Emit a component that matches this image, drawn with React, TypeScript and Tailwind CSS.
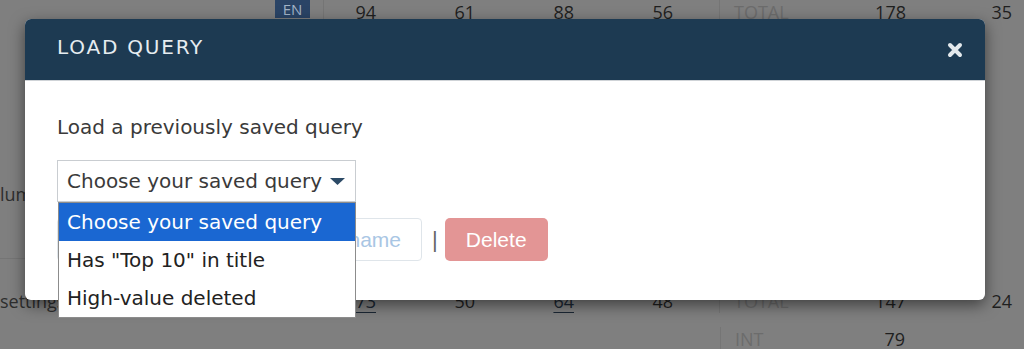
import React from 'react';

const numCell = 'w-[99px] text-right';

function TableRow({ cells, total, a, b, link = [] as number[] }: { cells: string[]; total: string; a: string; b: string; link?: number[] }) {
  return (
    <div className="flex h-[24px] text-[18px] leading-[24px] text-[#1f1f1f]">
      <div className="w-[52px] text-right">
        <span className={link.includes(0) ? 'text-[#1b2733] underline underline-offset-4' : ''}>{cells[0]}</span>
      </div>
      {cells.slice(1).map((c, i) => (
        <div key={i} className={numCell}>
          <span className={link.includes(i + 1) ? 'text-[#1b2733] underline underline-offset-4' : ''}>{c}</span>
        </div>
      ))}
      <div className="w-[46px]" />
      <div className="w-px self-stretch bg-[#757575]" />
      <div className="w-[120px] pl-[14px] text-[#6c6c6c]">{total}</div>
      <div className="w-[66px] text-right">{a}</div>
      <div className="w-[106px] text-right">{b}</div>
    </div>
  );
}

function CloseIcon() {
  return (
    <svg width="16" height="16" viewBox="0 0 16 16" className="text-[#e3e8ec]">
      <path d="M3 3 L13 13 M13 3 L3 13" stroke="currentColor" strokeWidth="4" strokeLinecap="round" />
    </svg>
  );
}

export default function App() {
  const options = ['Choose your saved query', 'Has "Top 10" in title', 'High-value deleted'];

  return (
    <div className="relative h-[349px] w-[1024px] overflow-hidden bg-[#7f7f7f] font-['Open_Sans',sans-serif]">
      {/* page behind the backdrop */}
      <div className="flex flex-col">
        <div className="flex h-[24px]">
          <div className="w-[275px]" />
          <div className="flex h-[18px] w-[35px] items-end justify-center bg-[#2a4466] text-[15px] leading-[17px] text-[#a3b3c6]">
            EN
          </div>
          <div className="w-[13px]" />
          <div className="w-px bg-[#757575]" />
          <TableRow cells={['94', '61', '88', '56']} total="TOTAL" a="178" b="35" />
        </div>
        <div className="h-[158px]" />
        <div className="h-[24px] text-[18px] leading-[24px] text-[#2e2e2e]">lumn</div>
        <div className="h-[52px]" />
        <div className="h-px w-[323px] bg-[#757575]" />
        <div className="h-[30px]" />
        <div className="flex h-[24px]">
          <div className="w-[324px] text-[18px] leading-[24px] text-[#2e2e2e]">settings</div>
          <TableRow cells={['73', '50', '64', '48']} total="TOTAL" a="147" b="24" link={[0, 2]} />
        </div>
        <div className="h-[14px]" />
        <div className="flex h-[24px] text-[18px] leading-[24px]">
          <div className="w-[720px]" />
          <div className="w-px bg-[#757575]" />
          <div className="w-[120px] pl-[14px] text-[#6c6c6c]">INT</div>
          <div className="w-[64px] text-right text-[#1f1f1f]">79</div>
        </div>
      </div>

      {/* modal */}
      <div className="absolute left-[25px] top-[19px] w-[960px] rounded-[6px] bg-white font-['DejaVu_Sans',sans-serif] shadow-[0_5px_15px_rgba(0,0,0,0.5)]">
        <div className="flex h-[62px] items-center justify-between rounded-t-[6px] border-b border-[#cfd3d7] bg-[#1d3a52] pl-[32px] pr-[22px]">
          <h2 className="pb-[6px] text-[20px] tracking-[1.8px] text-[#e6ecf0]">LOAD QUERY</h2>
          <CloseIcon />
        </div>
        <div className="px-[32px] pb-[39px] pt-[32px]">
          <p className="text-[20px] leading-[28px] text-[#3a3a3a]">Load a previously saved query</p>
          <div className="relative mt-[19px] w-[299px]">
            <div className="flex h-[42px] items-center border border-[#c9cdd1] pl-[9px] pr-[10px] text-[20px] text-[#3a3a3a]">
              <span className="flex-1">{options[0]}</span>
              <svg width="15" height="7" viewBox="0 0 15 7">
                <path d="M0 0 H15 L7.5 7 Z" fill="#2c4a66" />
              </svg>
            </div>
            <ul className="absolute left-px top-full z-10 w-[298px] border border-[#8c8c8c] bg-white text-[20px]">
              {options.map((o, i) => (
                <li
                  key={o}
                  className={`flex h-[38px] items-center pl-[8px] ${i === 0 ? 'bg-[#1a67d2] text-white' : 'text-[#222]'}`}
                >
                  {o}
                </li>
              ))}
            </ul>
          </div>
          <div className="mt-[16px] flex items-center font-['Liberation_Sans',sans-serif]">
            <input
              placeholder="New name"
              className="h-[43px] w-[365px] rounded-[4px] border border-[#dfe5ea] pr-[20px] text-right text-[21px] outline-none placeholder:text-[#a9c6e4]"
            />
            <span className="ml-[10px] mr-[7px] text-[22px] text-[#666]">|</span>
            <button className="h-[43px] w-[103px] rounded-[5px] bg-[#e39595] text-[21px] text-white">Delete</button>
          </div>
        </div>
      </div>
    </div>
  );
}
